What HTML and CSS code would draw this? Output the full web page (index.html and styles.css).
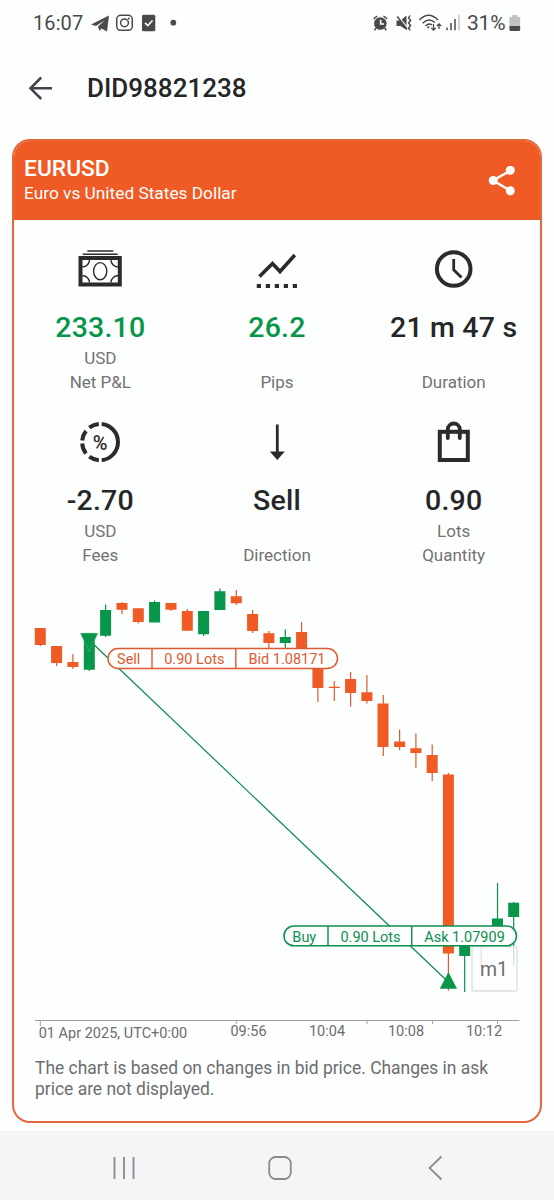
FILE: index.html
```
<!DOCTYPE html>
<html lang="en">
<head>
<meta charset="utf-8">
<title>DID98821238</title>
<link rel="stylesheet" href="styles.css">
</head>
<body>
<div class="screen">
  <header class="status">
    <span class="clock">16:07</span>
    <svg class="status-left" width="94" height="22" viewBox="88 12 94 22">
      <path class="ink" d="M91 24.500L109 15.500L107 31.500L101.500 28.500L99.500 31L98 26.500L105 20L96 26Z"/>
      <rect class="line" x="116.700" y="15.300" width="15.600" height="15" rx="4"/>
      <circle class="line" cx="124.500" cy="22.800" r="3.900"/>
      <circle class="ink" cx="128.800" cy="18.500" r="1"/>
      <rect class="ink" x="142" y="14.800" width="13.300" height="16.400" rx="1.500"/>
      <path class="check" d="M145 22.800L147.800 25.500L152.500 20.500"/>
      <circle class="ink" cx="173.300" cy="22.700" r="2.900"/>
    </svg>
    <svg class="status-right" width="92" height="22" viewBox="370 12 92 22">
      <circle class="ink" cx="380.300" cy="23.500" r="6.300"/>
      <path class="line" d="M373.600 18.800L377.200 16M383.500 16L387.200 18.800M375.800 28L374.500 30.300M384.800 28L386.200 30.300"/>
      <path class="check" d="M380.700 19.800V24H384"/>
      <path class="ink" d="M396.500 20.500H400.500L406.500 15.500V30L400.500 26H396.500Z"/>
      <path class="slash" d="M397.500 15.500L408 28.500"/>
      <path class="line" d="M397.200 16.500L407 29"/>
      <path class="line" d="M410 15.500L408.600 18L410.600 20.500L408.600 23L410.600 25.500L408.600 28L410 30.300"/>
      <path class="line" d="M419.500 20Q428.500 10.500 438 20M422.600 23.200Q428.500 17 435 22.500M425.500 26Q429 22.700 432 25"/>
      <circle class="ink" cx="428.300" cy="27.300" r="1.100"/>
      <path class="line thin" d="M433.500 24V30M431.300 28L433.500 30.200L435.700 28M439 29V24M436.800 26L439 23.800L441.200 26"/>
      <path class="line" d="M447 27.500V30.300M451 23V30.300M455 19V30.300"/>
      <path class="faint" d="M459 15V30.300"/>
    </svg>
    <span class="percent">31%</span>
    <svg class="battery" width="12" height="18" viewBox="0 0 12 18">
      <path class="cell" d="M3 3V1.500Q3 1 3.500 1H8Q8.500 1 8.500 1.500V3H10Q11.200 3 11.200 4.200V12H.4V4.200Q.4 3 1.600 3Z"/>
      <path class="ink" d="M.4 12H11.200V15.500Q11.200 17 9.700 17H1.900Q.4 17 .4 15.500Z"/>
    </svg>
  </header>

  <nav class="toolbar">
    <svg class="back" width="26" height="26" viewBox="28 74 26 26"><path d="M52 87.300H31M41.200 76.500L30.500 87.300L41.200 98"/></svg>
    <h1>DID98821238</h1>
  </nav>

  <main class="card">
    <div class="card-head">
      <div>
        <h2>EURUSD</h2>
        <p>Euro vs United States Dollar</p>
      </div>
      <svg class="share" width="28" height="30" viewBox="488 165 28 30">
        <path d="M510.500 169.500L493 179.500L510.500 189.700"/>
        <circle cx="510.300" cy="169.300" r="4.500"/><circle cx="493.200" cy="179.500" r="4.500"/><circle cx="510.300" cy="189.800" r="4.500"/>
      </svg>
    </div>

    <section class="stats">
      <div class="stat">
        <svg class="icon" width="48" height="44" viewBox="76 247 48 44">
          <path class="s1" d="M87.300 251H113.300M82.700 254.200H117.700"/>
          <rect class="s4" x="80.500" y="258" width="39.300" height="26.500"/>
          <ellipse class="s1" cx="100.200" cy="271.200" rx="6.600" ry="8.600"/>
          <path class="s1" d="M89.500 260A8 7 0 0 1 82.500 267M111 260A8 7 0 0 0 118 267M82.500 275.500A8 7 0 0 1 89.500 282.500M118 275.500A8 7 0 0 0 111 282.500"/>
        </svg>
        <strong class="up">233.10</strong><span>USD</span><span>Net P&amp;L</span>
      </div>
      <div class="stat">
        <svg class="icon" width="48" height="44" viewBox="253 247 48 44">
          <path class="s3" d="M259.500 276.500L272.500 263.500L280 271.500L294.800 255"/>
          <path class="dots" d="M256.800 286H297"/>
        </svg>
        <strong class="up">26.2</strong><span></span><span>Pips</span>
      </div>
      <div class="stat">
        <svg class="icon" width="48" height="44" viewBox="430 247 48 44">
          <circle class="s4" cx="453.700" cy="269" r="16.800"/>
          <path class="s25" d="M453.700 259V269.800L461.500 277.500"/>
        </svg>
        <strong>21 m 47 s</strong><span></span><span>Duration</span>
      </div>
      <div class="stat">
        <svg class="icon" width="48" height="44" viewBox="76 420 48 44">
          <path class="s4" d="M101.700 424A18.200 18.200 0 0 1 101.700 460.200"/>
          <path class="s4" d="M98.800 424A18.200 18.200 0 0 0 89.300 427.700M86 431A18.200 18.200 0 0 0 82.200 440.500M82.200 443.500A18.200 18.200 0 0 0 86 453.400M89.300 456.600A18.200 18.200 0 0 0 98.800 460.200"/>
          <text class="pct" x="100.200" y="449.600">%</text>
        </svg>
        <strong>-2.70</strong><span>USD</span><span>Fees</span>
      </div>
      <div class="stat">
        <svg class="icon" width="48" height="44" viewBox="253 420 48 44">
          <path class="s25" d="M277.300 424.500V454"/><path class="solid" d="M269.800 451.500H284.800L277.300 460Z"/>
        </svg>
        <strong>Sell</strong><span></span><span>Direction</span>
      </div>
      <div class="stat">
        <svg class="icon" width="48" height="44" viewBox="430 420 48 44">
          <rect class="s4" x="439.800" y="431.800" width="28" height="28.200"/>
          <path class="s3 round" d="M447.800 438V429.500A6 6 0 0 1 459.800 429.500V438"/>
        </svg>
        <strong>0.90</strong><span>Lots</span><span>Quantity</span>
      </div>
    </section>

    <svg class="chart" width="526" height="472" viewBox="14 575 526 472">
      <g class="red">
        <path class="wick" d="M40.300 628V646M56.600 646V666M72.900 654V669M122 602V614M138.300 608V623.500M171 603V611M187.300 609V631M236.300 590V605M252.600 610V633M268.900 631V648M301.600 622V660M317.900 655V702M334.300 681V701M350.600 672V706.500M366.900 675V703.500M383.300 695V756M399.600 729.500V750M415.900 733.500V768M432.200 744.500V781M448.400 773V990.500"/>
        <path class="wick" d="M481.200 940V968"/>
        <path class="body" d="M40.300 628V645M56.600 646V663M72.900 662V667M122 603V609.700M138.300 608.300V622M171 603V609.700M187.300 611V630.700M236.300 596.300V603.300M252.600 614V631M268.900 633.300V643M301.600 632V655M317.900 655V688M334.300 686.700V688M350.600 679V693M366.900 692.300V701M383 703.500V747M399.600 741.500V747M415.900 748.300V753M432.200 755V773M448.400 774.500V953.500"/>
      </g>
      <g class="green">
        <path class="wick" d="M89.300 633V671M105.600 604.500V637M154.600 600.500V622M203.600 611V636M219.900 588.500V610M285.300 629.500V648M464.700 940V992M497.500 883V930M513.700 902V965"/>
        <path class="body" d="M89.300 633V669.700M105.600 610V635.700M154.600 602V622.500M203.600 611V634.300M219.900 591.300V610M285.300 637V643M464.700 940V956M497.500 918.500V930M513.700 902.700V917"/>
        <path class="trade" d="M89 640L448.300 982"/>
        <path class="marker in" d="M80.500 633.300H97.800L89.200 651.500Z"/>
        <path class="marker" d="M439.800 988.700H457L448.400 972Z"/>
      </g>
      <g class="pill red">
        <rect x="108" y="648.600" width="229.500" height="19.800" rx="9.900"/>
        <path d="M152 648.600V668.400M235.800 648.600V668.400"/>
        <text x="128.700" y="664.200">Sell</text><text x="194.300" y="664.200">0.90 Lots</text><text x="287" y="664.200">Bid 1.08171</text>
      </g>
      <rect class="frame-box" x="472" y="946.500" width="45" height="44.500" rx="2"/>
      <text class="frame" x="494" y="975.500">m1</text>
      <g class="pill green">
        <rect x="284" y="926" width="232.500" height="19.800" rx="9.900"/>
        <path d="M328 926V945.800M411.700 926V945.800"/>
        <text x="304.300" y="941.600">Buy</text><text x="370.500" y="941.600">0.90 Lots</text><text x="464.500" y="941.600">Ask 1.07909</text>
      </g>
      <path class="axis" d="M35 1020.500H519.500M40.300 1020.500V1026M236.300 1020.500V1024M367 1020.500V1024M432.500 1020.500V1024M497.500 1020.500V1024"/>
      <g class="times">
        <text class="date" x="113" y="1038">01 Apr 2025, UTC+0:00</text>
        <text x="248.500" y="1035.500">09:56</text><text x="327" y="1035.500">10:04</text><text x="406" y="1035.500">10:08</text><text x="484" y="1035.500">10:12</text>
      </g>
    </svg>
    <p class="note">The chart is based on changes in bid price. Changes in ask price are not displayed.</p>
  </main>

  <footer class="system-nav">
    <svg width="22" height="26" viewBox="0 0 22 26"><path d="M1.500 2V24M11 2V24M20.500 2V24"/></svg>
    <svg width="24" height="26" viewBox="0 0 24 26"><rect x="1.200" y="2" width="21.600" height="22" rx="6.500"/></svg>
    <svg width="22" height="26" viewBox="0 0 22 26"><path d="M16.500 1.500L4.500 13L16.500 24.500"/></svg>
  </footer>
</div>
</body>
</html>
```
FILE: styles.css
```
* { box-sizing: border-box; }
body { margin: 0; background: #fdfefe; font-family: Roboto, sans-serif; color: #252628; }
h1, h2, p { margin: 0; font-weight: 400; }
svg { display: block; flex: none; }

.screen { width: 554px; height: 1200px; display: flex; flex-direction: column; }

.status { height: 46px; display: flex; align-items: center; padding-left: 33px; color: #4a4a4c; font-size: 20px; }
.clock { width: 55px; letter-spacing: .1px; }
.status-left { margin-right: 188px; }
.percent { margin-left: 5px; width: 41px; font-size: 21px; letter-spacing: -.2px; }
.battery { margin-left: 1px; }
.ink { fill: #4a4a4c; }
.line { fill: none; stroke: #4a4a4c; stroke-width: 1.5; }
.thin { stroke-width: 1.3; }
.faint { stroke: #c4c4c4; stroke-width: 1.5; }
.check { fill: none; stroke: #fdfefe; stroke-width: 1.6; }
.slash { stroke: #fdfefe; stroke-width: 1.5; }
.cell { fill: #c2c2c2; }

.toolbar { height: 93px; display: flex; align-items: center; padding: 0 0 10px 28px; gap: 33px; }
.toolbar h1 { font-size: 26px; font-weight: 500; line-height: 32px; }
.back path { fill: none; stroke: #45434a; stroke-width: 2.5; }

.card { width: 530px; height: 984px; margin-left: 12px; border: 2px solid #e5683c; border-radius: 18px; overflow: hidden; display: flex; flex-direction: column; }
.card-head { height: 79px; flex: none; padding: 0 24px 0 10px; background: #f05a24; color: #fff; display: flex; align-items: center; justify-content: space-between; }
.card-head h2 { font-size: 22.8px; font-weight: 500; line-height: 26px; }
.card-head p { font-size: 17.3px; line-height: 23px; }
.share { stroke: #fff; stroke-width: 2.5; fill: none; }
.share circle { fill: #fff; stroke: none; }

.stats { display: grid; grid-template-columns: repeat(3, 1fr); grid-auto-rows: 173px; height: 355px; flex: none; margin: 0 -2px; padding-top: 27px; }
.stat { display: flex; flex-direction: column; align-items: center; color: #727274; font-size: 17px; line-height: 24px; }
.stat span { height: 24px; }
.stat strong { margin: 19px 0 1px; height: 35px; line-height: 35px; font-size: 28.5px; font-weight: 500; color: #252628; letter-spacing: .2px; }
.stat .up { color: #07954a; }
.icon { fill: none; stroke: #2b2b2c; }
.s1 { stroke-width: 1.4; }
.s25 { stroke-width: 2.8; }
.s3 { stroke-width: 3.6; }
.s4 { stroke-width: 4; }
.round { stroke-linecap: round; stroke-width: 3.8; }
.dots { stroke-width: 4; stroke-dasharray: 4.2 4.8; }
.solid { fill: #2b2b2c; stroke: none; }
.pct { fill: #2b2b2c; stroke: none; font-size: 20px; font-weight: 500; text-anchor: middle; }

.red { --tone: #f05a24; --ink: #dc5b30; }
.green { --tone: #07954a; --ink: #0d8f4e; }
.wick { stroke: var(--ink); stroke-width: 1.2; }
.body { stroke: var(--tone); stroke-width: 11; }
.trade { stroke: #0d8850; stroke-width: 1.2; }
.marker { fill: #07954a; }
.in { stroke: #45b878; stroke-width: .6; }
.pill rect { fill: #fdfefe; stroke: var(--ink); stroke-width: 1.5; }
.pill path { stroke: var(--ink); stroke-width: 1.4; }
.pill text { fill: var(--ink); font-size: 14.5px; text-anchor: middle; }
.frame-box { fill: #fdfefe; fill-opacity: .78; stroke: #dedede; stroke-width: 1.3; }
.frame { fill: #6d6d6f; font-size: 19.5px; text-anchor: middle; }
.axis { stroke: #a0a0a0; stroke-width: 1; }
.times text { fill: #6d6d6f; font-size: 14.5px; text-anchor: middle; }
.note { padding: 11px 36px 0 21px; color: #6d6d6f; font-size: 17.45px; line-height: 21px; }

.system-nav { margin-top: auto; height: 69px; background: #f5f5f8; display: flex; align-items: center; justify-content: space-between; padding: 4px 107px 0 113px; }
.system-nav svg { fill: none; stroke: #8b8b8e; stroke-width: 1.8; }
```
